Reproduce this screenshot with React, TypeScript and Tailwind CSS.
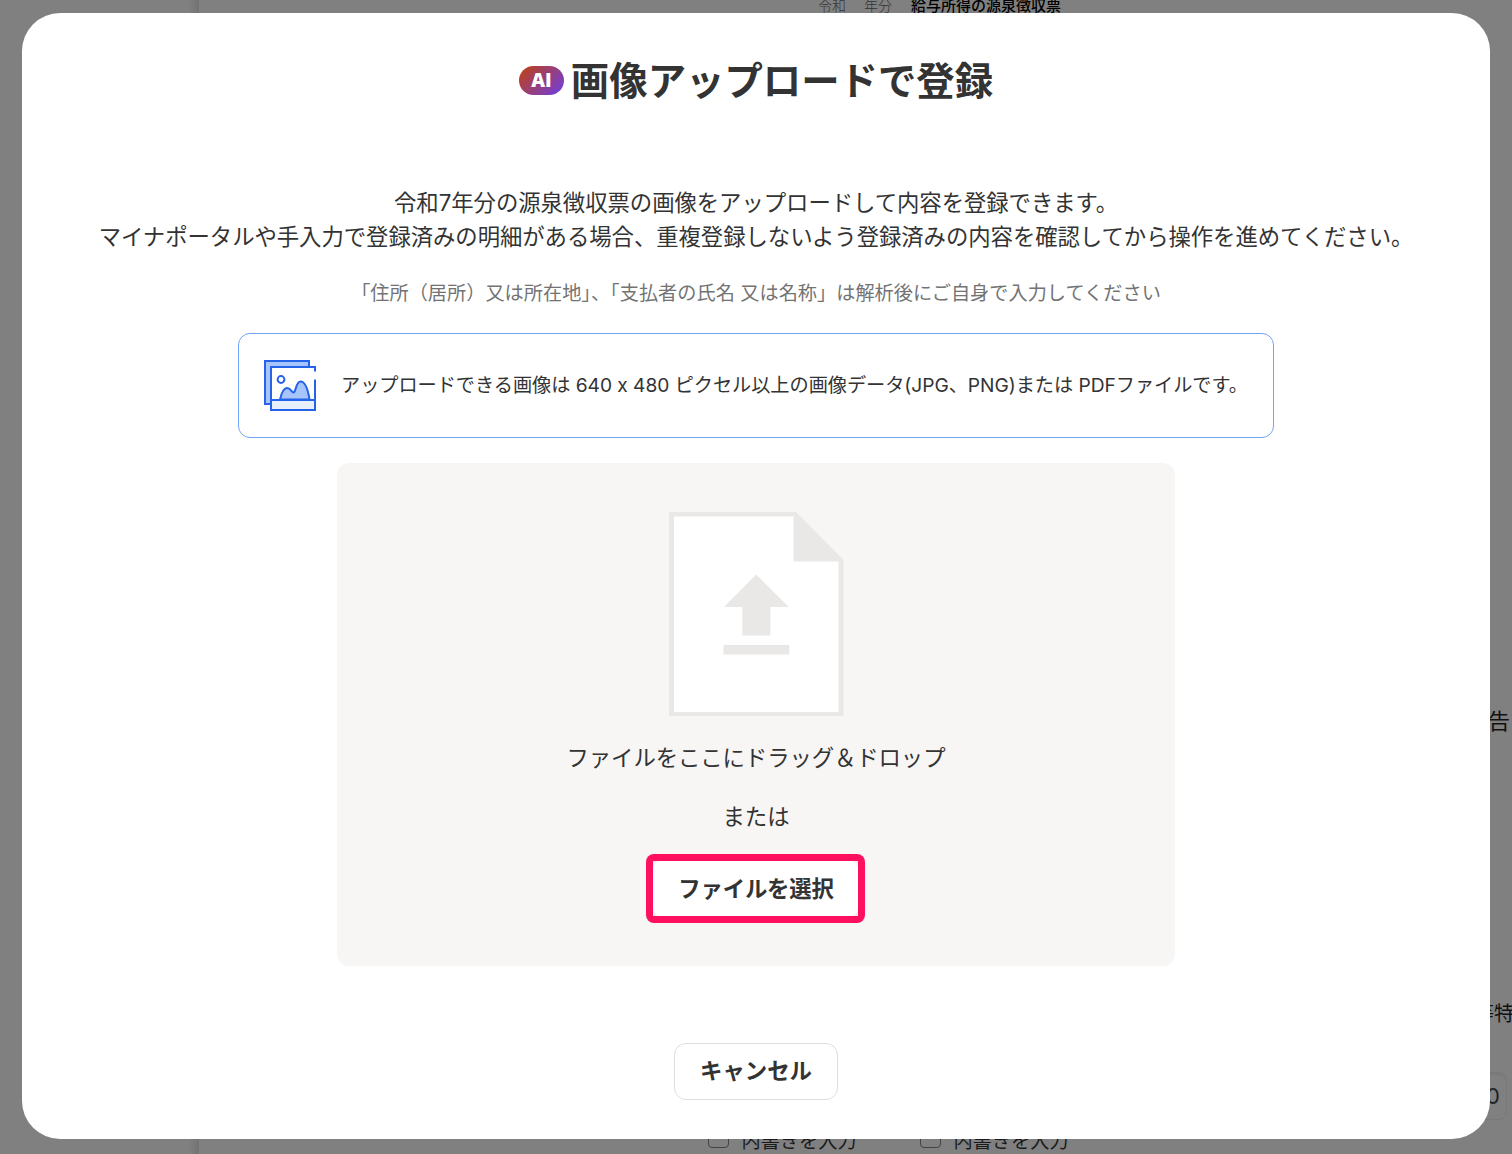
function PhotoIcon() {
  return (
    <svg width="53" height="53" viewBox="0 0 53 53" fill="none" stroke="#2563eb" strokeWidth="2" className="shrink-0">
      <path d="M8 45H2V2H46V8" fill="#a8c5fa" />
      <rect x="8" y="8" width="45" height="43" fill="#fff" stroke="none" />
      <path d="M17 40.500C19 32 21 29 24 29C28 29 28 33 30.500 33.500C33 33 33 22.500 37.500 22.500C43 22.500 45.500 34 46.500 40.500Z" fill="#a8c5fa" />
      <path d="M8 41H52V51H8Z" fill="#e8f0fe" />
      <path d="M52 12.500V8H8V51H52V20.500" />
      <circle cx="18" cy="20.500" r="3.400" />
    </svg>
  );
}

function UploadIcon() {
  return (
    <svg width="175" height="204" viewBox="0 0 175 204" className="shrink-0">
      <path d="M0 0H127L174.500 48V204H0Z" fill="#e9e8e7" />
      <path d="M5 4.500H124.500V49.500H169.500V200H5Z" fill="#fff" />
      <path d="M87.300 62.500L119.800 95H101.300V123.500H73.300V95H55Z M54.500 133H120.300V142.500H54.500Z" fill="#e9e8e7" />
    </svg>
  );
}

function Backdrop() {
  return (
    <div className="absolute inset-0 flex bg-[#808080] text-black">
      <div className="w-[199px] shrink-0 bg-[linear-gradient(to_right,transparent_189px,#727272)]" />
      <div className="relative grow">
        <div className="absolute top-[-4px] left-[619px] flex text-[14px] leading-[20px] whitespace-nowrap">
          <span className="w-[46px] font-light text-[#333]">令和</span>
          <span className="w-[47px] font-light text-[#333]">年分</span>
          <span className="text-[15px] font-medium">給与所得の源泉徴収票</span>
        </div>
        <span className="absolute top-[705px] left-[1289px] text-[22px] leading-[32px] text-[#111]">告</span>
        <span className="absolute top-[998px] left-[1275px] text-[20px] leading-[32px] whitespace-nowrap text-[#111]">等特</span>
        <div className="absolute top-[1072px] left-[1230px] flex h-[48px] w-[78px] items-center justify-end rounded-lg border border-[#797979] pr-[6px] text-[22px] text-[#222] shadow-[inset_0_2px_1px_#7a7a7a]">0</div>
        <div className="absolute top-[1126px] left-[509px] flex text-[19.2px] leading-[30px] whitespace-nowrap text-[#1a1a1a]">
          {[0, 1].map((item) => (
            <label key={item} className="flex w-[212px] items-start gap-[13px]">
              <span className="mt-px h-[21px] w-[20.5px] rounded-[4px] border border-[#444]" />
              内書きを入力
            </label>
          ))}
        </div>
      </div>
    </div>
  );
}

export default function App() {
  return (
    <div className="relative h-[1154px] w-[1512px] overflow-hidden px-[22px] py-[13px] font-[Inter,Noto_Sans_CJK_JP,sans-serif] text-[#333]" lang="ja">
      <Backdrop />
      <main className="relative flex h-[1126px] w-[1468px] flex-col items-center rounded-[38px] bg-white whitespace-nowrap" role="dialog">
        <h1 className="mt-[40px] flex h-[58px] items-center gap-[7px] text-[38.4px] font-bold">
          <span className="mb-[4px] flex h-[29px] w-[45px] items-center justify-center rounded-full bg-[linear-gradient(135deg,#c2410c,#6d3de8)] font-['Open_Sans'] text-[19px] leading-none font-extrabold text-white">AI</span>
          画像アップロードで登録
        </h1>
        <div className="mt-[75px] text-center text-[22.4px] leading-[34px] tracking-[-0.07px]">
          <p>令和7年分の源泉徴収票の画像をアップロードして内容を登録できます。</p>
          <p>マイナポータルや手入力で登録済みの明細がある場合、重複登録しないよう登録済みの内容を確認してから操作を進めてください。</p>
        </div>
        <p className="mt-[24px] text-[19.2px] leading-[30px] text-[#737373]">「住所（居所）又は所在地」、「支払者の氏名 又は名称」は解析後にご自身で入力してください</p>
        <section className="mt-[25px] flex h-[105px] w-[1036px] items-center gap-[25px] rounded-xl border border-[#70a5fa] pl-[24px] text-[19.2px] tracking-[-0.045px]">
          <PhotoIcon />
          <p>アップロードできる画像は 640 x 480 ピクセル以上の画像データ(JPG、PNG)または PDFファイルです。</p>
        </section>
        <section className="mt-[25px] flex h-[503px] w-[838px] flex-col items-center rounded-xl bg-[#f7f6f5] pt-[49px] text-[22.4px] leading-[34px]">
          <UploadIcon />
          <p className="mt-[25px] tracking-[-0.1px]">ファイルをここにドラッグ＆ドロップ</p>
          <p className="mt-[25px]">または</p>
          <div className="mt-[20px] mr-px flex h-[69px] w-[219px] rounded-[8px] bg-[#ff0f5f] p-[7px]">
            <div className="flex grow bg-[#f0efee]">
              <button className="grow rounded-[8px] bg-white pl-px font-bold tracking-[-0.2px]">ファイルを選択</button>
            </div>
          </div>
        </section>
        <button className="mt-[77px] h-[57px] w-[164px] rounded-xl border border-[#dedede] pb-[2px] text-[22.4px] font-bold">キャンセル</button>
      </main>
    </div>
  );
}
